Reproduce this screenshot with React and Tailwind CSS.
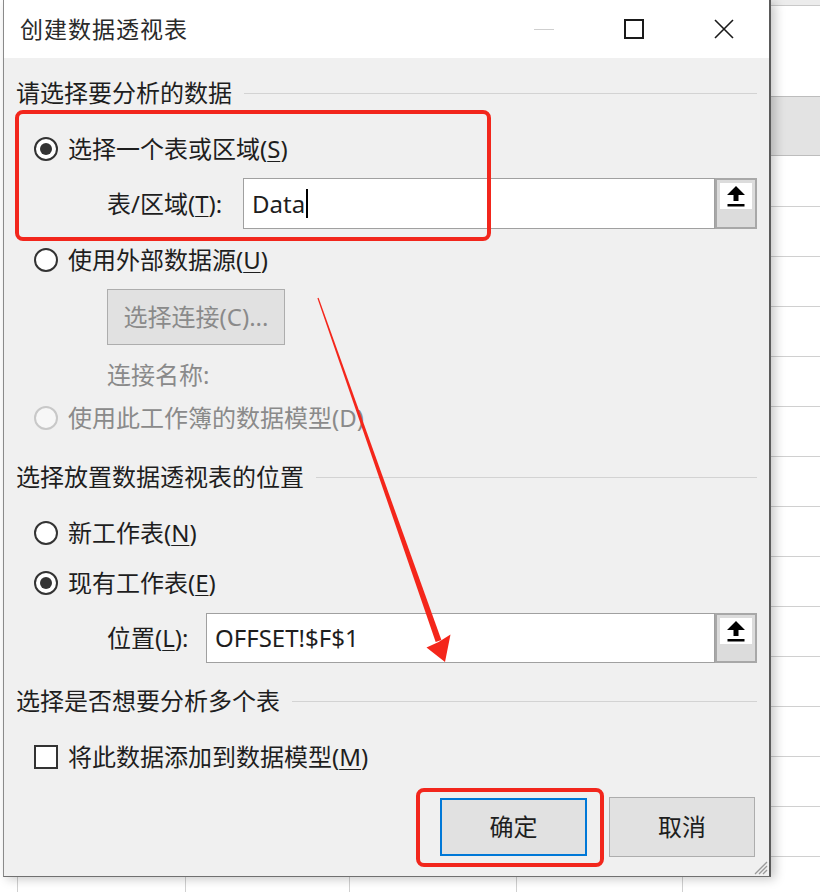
import React from "react";

const font = "font-['Noto_Sans','Noto_Sans_CJK_SC',sans-serif]";

function Radio({ checked, disabled }) {
  return (
    <span
      className={
        disabled
          ? "flex h-[24px] w-[24px] shrink-0 items-center justify-center rounded-full border-2 border-[#c8c8c8] bg-[#f7f7f7]"
          : "flex h-[24px] w-[24px] shrink-0 items-center justify-center rounded-full border-2 border-[#333333] bg-white"
      }
    >
      {checked && <span className="h-[12px] w-[12px] rounded-full bg-[#333333]" />}
    </span>
  );
}

function U({ children }) {
  return <span className="underline decoration-1 underline-offset-[3px]">{children}</span>;
}

function SectionHeader({ children, className }) {
  return (
    <div className={"flex h-[30px] items-center " + className}>
      <span className="whitespace-nowrap text-[24px] leading-none text-[#1e1e1e]">{children}</span>
      <span className="ml-[12px] h-px flex-1 bg-[#d3d3d3]" />
    </div>
  );
}

function UpIcon() {
  return (
    <svg width="18" height="21" viewBox="0 0 18 21">
      <path d="M9 0 L18 9 H11.5 V15 H6.5 V9 H0 Z" fill="#000" />
      <rect x="0.5" y="18" width="17" height="2.5" fill="#000" />
    </svg>
  );
}

function PickButton() {
  return (
    <div className="flex h-full w-[42px] shrink-0 flex-col border-2 border-[#a8a8a8] bg-[#dcdcdc] p-[3px]">
      <div className="flex h-[26px] items-center justify-center bg-white">
        <UpIcon />
      </div>
    </div>
  );
}

export default function App() {
  const rows = Array.from({ length: 13 });
  return (
    <div className={"relative h-[892px] w-[820px] overflow-hidden bg-white " + font}>
      <div className="grid h-[892px] w-[820px] grid-cols-[3px_768px_49px] grid-rows-[877px_15px]">
        {/* left sliver of sheet */}
        <div className="bg-white" />

        {/* dialog */}
        <div className="relative z-10 flex flex-col border-b border-l border-r-2 border-b-[#707070] border-l-[#8a8a8a] border-r-[#5a5a5a] shadow-[4px_2px_10px_rgba(0,0,0,0.22)]">
          {/* title bar */}
          <div className="flex h-[58px] items-center bg-white">
            <span className="pl-[16px] text-[23px] leading-none tracking-[1px] text-[#2a2a2a]">创建数据透视表</span>
            <span className="flex-1" />
            <span className="flex w-[90px] items-center justify-center">
              <span className="h-px w-[20px] bg-[#cfcfcf]" />
            </span>
            <span className="flex w-[90px] items-center justify-center">
              <span className="h-[20px] w-[20px] border-2 border-[#1a1a1a]" />
            </span>
            <span className="flex w-[90px] items-center justify-center">
              <svg width="20" height="20" viewBox="0 0 20 20">
                <path d="M1 1 L19 19 M19 1 L1 19" stroke="#1a1a1a" strokeWidth="1.6" />
              </svg>
            </span>
          </div>

          {/* body */}
          <div className="relative flex flex-1 flex-col bg-[#f0f0f0] px-[12px] pt-[20px] text-[#1e1e1e]">
            <SectionHeader>请选择要分析的数据</SectionHeader>

            <div className="mt-[23px] flex h-[36px] items-center pl-[18px]">
              <Radio checked />
              <span className="ml-[10px] text-[24px] leading-none">
                选择一个表或区域(<U>S</U>)
              </span>
            </div>

            <div className="mt-[11px] flex h-[51px] items-center pl-[91px]">
              <span className="w-[136px] shrink-0 text-[24px] leading-none">
                表/区域(<U>T</U>):
              </span>
              <div className="flex h-full flex-1 items-center border border-[#a0a0a0] bg-white pl-[8px] text-[24px] leading-none">
                Data
                <span className="ml-px h-[29px] w-[2px] bg-black" />
              </div>
              <PickButton />
            </div>

            <div className="mt-[13px] flex h-[36px] items-center pl-[18px]">
              <Radio />
              <span className="ml-[10px] text-[24px] leading-none">
                使用外部数据源(<U>U</U>)
              </span>
            </div>

            <div className="ml-[91px] mt-[11px] flex h-[56px] w-[178px] items-center justify-center border border-[#adadad] bg-[#e1e1e1] text-[24px] leading-none text-[#8a8a8a]">
              选择连接(C)...
            </div>

            <div className="mt-[15px] flex h-[30px] items-center pl-[91px] text-[24px] leading-none text-[#8a8a8a]">
              连接名称:
            </div>

            <div className="mt-[10px] flex h-[36px] items-center pl-[18px]">
              <Radio disabled />
              <span className="ml-[10px] text-[24px] leading-none text-[#8a8a8a]">使用此工作簿的数据模型(D)</span>
            </div>

            <SectionHeader className="mt-[26px]">选择放置数据透视表的位置</SectionHeader>

            <div className="mt-[23px] flex h-[36px] items-center pl-[18px]">
              <Radio />
              <span className="ml-[10px] text-[24px] leading-none">
                新工作表(<U>N</U>)
              </span>
            </div>

            <div className="mt-[14px] flex h-[36px] items-center pl-[18px]">
              <Radio checked />
              <span className="ml-[10px] text-[24px] leading-none">
                现有工作表(<U>E</U>)
              </span>
            </div>

            <div className="mt-[12px] flex h-[50px] items-center pl-[91px]">
              <span className="w-[99px] shrink-0 text-[24px] leading-none">
                位置(<U>L</U>):
              </span>
              <div className="flex h-full flex-1 items-center border border-[#a0a0a0] bg-white pl-[8px] text-[24px] leading-none">
                OFFSET!$F$1
              </div>
              <PickButton />
            </div>

            <SectionHeader className="mt-[23px]">选择是否想要分析多个表</SectionHeader>

            <div className="mt-[23px] flex h-[36px] items-center pl-[18px]">
              <span className="h-[24px] w-[24px] shrink-0 border-2 border-[#333333] bg-white" />
              <span className="ml-[10px] text-[24px] leading-none">
                将此数据添加到数据模型(<U>M</U>)
              </span>
            </div>

            <div className="mr-[2px] mt-[22px] flex h-[60px] items-center justify-end gap-[22px]">
              <div className="flex h-[58px] w-[147px] items-center justify-center border-2 border-[#0078d7] bg-[#e1e1e1] text-[24px] leading-none">
                确定
              </div>
              <div className="flex h-[60px] w-[146px] items-center justify-center border border-[#adadad] bg-[#e1e1e1] text-[24px] leading-none">
                取消
              </div>
            </div>

            <svg className="absolute bottom-[1px] right-[1px]" width="16" height="16" viewBox="0 0 16 16">
              <path d="M15 3 L3 15 M15 7 L7 15 M15 11 L11 15" stroke="#9a9a9a" strokeWidth="1.3" />
            </svg>
          </div>
        </div>

        {/* right sheet strip */}
        <div className="row-span-2 flex flex-col bg-white">
          <div className="h-[6px] border-b border-[#c9c9c9] bg-[#ececec]" />
          <div className="h-[91px] border-b border-[#bdbdbd]" />
          <div className="h-[59px] border-b border-[#bdbdbd] bg-[#e3e3e3]" />
          <div className="h-[51px] border-b border-[#d0d0d0]" />
          {rows.map((_, i) => (
            <div key={i} className="h-[50px] shrink-0 border-b border-[#d0d0d0]" />
          ))}
          <div className="flex-1" />
        </div>

        {/* bottom sheet strip */}
        <div className="col-span-2 flex bg-white">
          <div className="w-[18px] border-r border-[#d0d0d0]" />
          <div className="w-[168px] border-r border-[#d0d0d0]" />
          <div className="w-[164px] border-r border-[#d0d0d0]" />
          <div className="w-[167px] border-r border-[#d0d0d0]" />
          <div className="w-[166px] border-r border-[#d0d0d0]" />
          <div className="flex-1" />
        </div>
      </div>

      {/* red annotations */}
      <div className="pointer-events-none absolute left-[15px] top-[110px] z-20 h-[131px] w-[476px] rounded-[8px] border-4 border-[#f2261c]" />
      <div className="pointer-events-none absolute left-[416px] top-[788px] z-20 h-[79px] w-[188px] rounded-[8px] border-4 border-[#f2261c]" />
      <svg className="pointer-events-none absolute left-0 top-0 z-20" width="820" height="892" viewBox="0 0 820 892">
        <polygon points="318.6,297.8 317.4,298.2 435.7,641.9 441.4,640.0" fill="#f4261b" />
        <polygon points="445,662 450.5,634.5 438.6,642 426.5,647.5" fill="#f4261b" />
      </svg>
    </div>
  );
}
